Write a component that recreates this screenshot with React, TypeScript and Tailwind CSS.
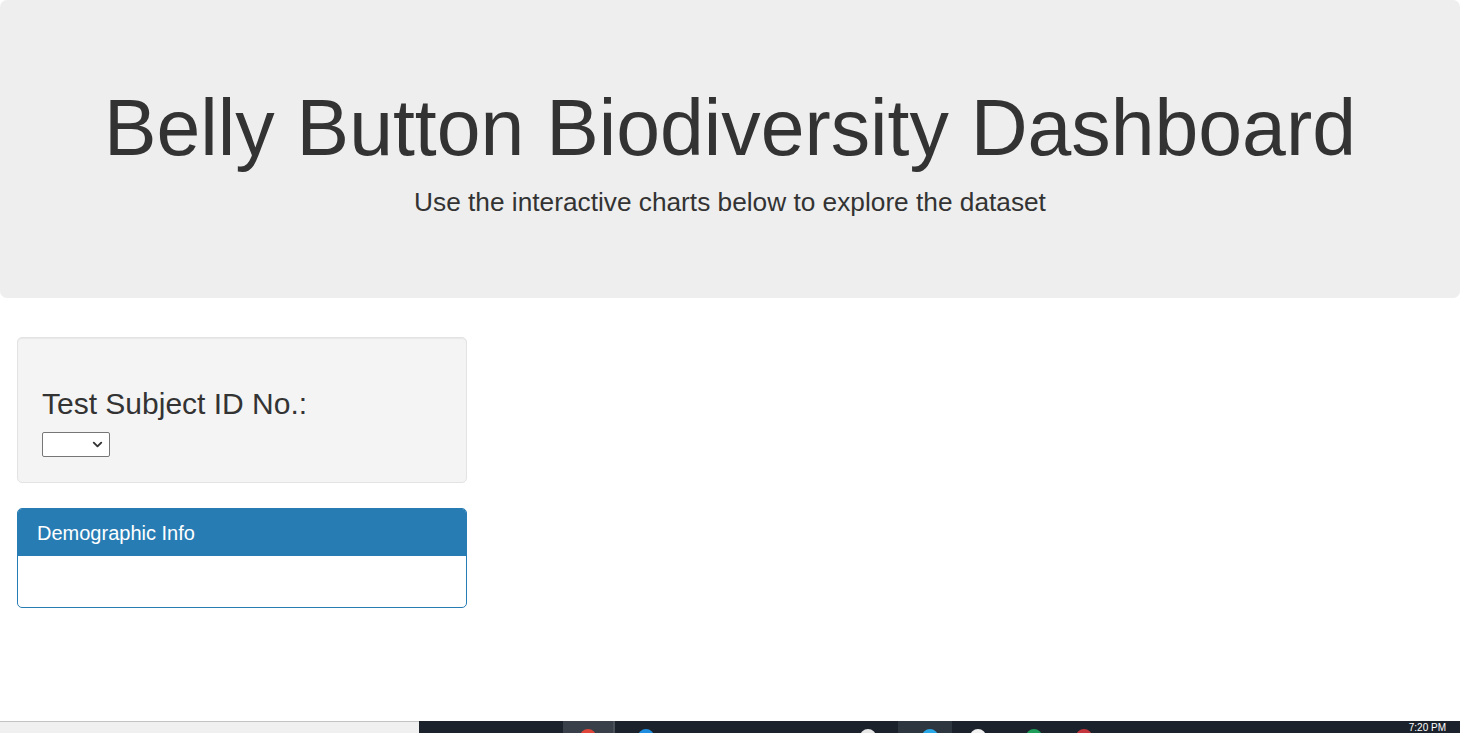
import { ChevronDown } from 'lucide-react'

// Taskbar icons peeking in from below the viewport edge
const trayIcons = [
  { left: 580, color: 'bg-[#e0453a]' },
  { left: 638, color: 'bg-[#1f8ee0]' },
  { left: 860, color: 'bg-[#e8e8e8]' },
  { left: 922, color: 'bg-[#29a8e8]' },
  { left: 970, color: 'bg-[#f2f2f2]' },
  { left: 1026, color: 'bg-[#1e9e5a]' },
  { left: 1076, color: 'bg-[#c4343c]' },
]

export default function App() {
  return (
    <div className="flex h-[733px] flex-col overflow-hidden bg-white font-['Liberation_Sans',Arial,sans-serif] text-[#333]">
      <main className="flex-1">
        {/* Jumbotron */}
        <header className="flex h-[298px] flex-col items-center rounded-[7px] bg-[#eee] pt-[85px] text-center">
          <h1 className="text-[78.75px] leading-[1.1] font-normal">Belly Button Biodiversity Dashboard</h1>
          <p className="mt-[12.5px] text-[26.25px] leading-[37.5px]">Use the interactive charts below to explore the dataset</p>
        </header>

        <div className="mt-[39px] flex px-[17px]">
          <div className="flex w-[450px] flex-col gap-[25px]">
            {/* Well with the selector */}
            <div className="rounded-[5px] border border-[#e3e3e3] bg-[#f4f4f4] px-[24px] pt-[49px] pb-[25px] shadow-[inset_0_1px_1px_rgba(0,0,0,0.05)]">
              <h3 className="text-[30px] leading-[33px] font-normal">Test Subject ID No.:</h3>
              <div className="mt-[12px] flex h-[25px] w-[68px] items-center justify-end rounded-[2px] border border-[#767676] bg-white pr-[4px]">
                <ChevronDown size={15} strokeWidth={3} className="text-[#333]" />
              </div>
            </div>

            {/* Demographic panel */}
            <div className="overflow-hidden rounded-[5px] border border-[#287cb4] bg-white">
              <div className="bg-[#287cb4] px-[19px] py-[12.5px]">
                <h3 className="text-[20px] leading-[22px] font-normal text-white">Demographic Info</h3>
              </div>
              <div className="h-[51px]" />
            </div>
          </div>
        </div>
      </main>

      {/* Windows taskbar sliver */}
      <footer className="relative flex h-[12px] shrink-0">
        <div className="w-[419px] border-t border-[#c3c3c3] bg-[#f0f0f0]" />
        <div className="flex flex-1 bg-[#1b222c]">
          <div className="ml-[144px] w-[50px] bg-[#3a4049]" />
          <div className="w-[2px] bg-[#4a5058]" />
          <div className="ml-[283px] w-[54px] bg-[#2e3640]" />
          <div className="flex-1" />
          <span className="mr-[14px] pt-[1px] text-[10px] leading-[11px] text-white">7:20 PM</span>
        </div>
        {trayIcons.map((icon) => (
          <span
            key={icon.left}
            className={`absolute top-[8px] h-[16px] w-[16px] rounded-full ${icon.color}`}
            style={{ left: icon.left }}
          />
        ))}
      </footer>
    </div>
  )
}
